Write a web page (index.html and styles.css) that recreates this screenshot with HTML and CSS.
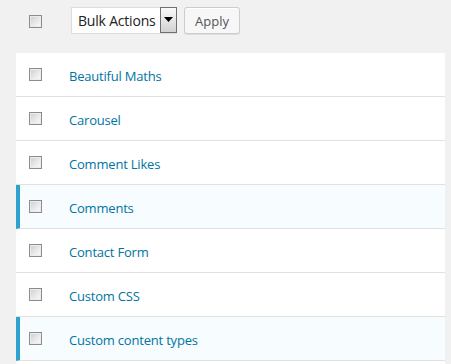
FILE: index.html
```html
<!DOCTYPE html>
<html>
<head>
<meta charset="utf-8">
<link rel="stylesheet" href="styles.css">
</head>
<body>
<div class="page">
  <div class="toolbar">
    <span class="cb-cell"><input type="checkbox" class="cb"></span>
    <div class="select">
      <span class="select-label">Bulk Actions</span>
      <span class="select-arrow"><svg width="9" height="5" viewBox="0 0 9 5"><path d="M0 0h9L4.5 5z" fill="#000"/></svg></span>
    </div>
    <button class="btn">Apply</button>
  </div>
  <div class="list">
    <div class="row"><span class="cb-cell"><input type="checkbox" class="cb"></span><a class="name">Beautiful Maths</a></div>
    <div class="row"><span class="cb-cell"><input type="checkbox" class="cb"></span><a class="name">Carousel</a></div>
    <div class="row"><span class="cb-cell"><input type="checkbox" class="cb"></span><a class="name">Comment Likes</a></div>
    <div class="row active"><span class="cb-cell"><input type="checkbox" class="cb"></span><a class="name">Comments</a></div>
    <div class="row"><span class="cb-cell"><input type="checkbox" class="cb"></span><a class="name">Contact Form</a></div>
    <div class="row"><span class="cb-cell"><input type="checkbox" class="cb"></span><a class="name">Custom CSS</a></div>
    <div class="row active"><span class="cb-cell"><input type="checkbox" class="cb"></span><a class="name">Custom content types</a></div>
    <div class="row-tail"></div>
  </div>
</div>
</body>
</html>
```
FILE: styles.css
```css
html, body {
  margin: 0;
  padding: 0;
  background: #f1f1f1;
  font-family: "Open Sans", "Noto Sans", sans-serif;
  overflow: hidden;
}
.page {
  width: 451px;
  height: 364px;
  overflow: hidden;
}
.toolbar {
  display: flex;
  align-items: center;
  height: 41px;
  padding: 0 0 0 29px;
  box-sizing: border-box;
  margin-bottom: 12px;
}
.toolbar .cb-cell {
  width: 42px;
  display: flex;
  align-items: center;
  margin-top: 1px;
}
.cb {
  appearance: none;
  -webkit-appearance: none;
  margin: 0;
  width: 13px;
  height: 13px;
  box-sizing: border-box;
  border: 1px solid #8c8c8c;
  background: linear-gradient(135deg, #c9cbce 0%, #e6e7e8 50%, #fbfbfb 100%);
  box-shadow: inset 0 0 0 1px #ececec;
  display: block;
}
.select {
  display: flex;
  align-items: center;
  height: 27px;
  box-sizing: border-box;
  border: 1px solid #dddddd;
  background: #fff;
  width: 106px;
  margin-top: -1px;
}
.select-label {
  flex: 1;
  padding-left: 6px;
  font-size: 14px;
  color: #222;
  font-family: "Open Sans", sans-serif;
  letter-spacing: -0.2px;
}
.select-arrow {
  width: 17px;
  height: 26px;
  margin: -1px -1px -1px 0;
  box-sizing: border-box;
  border: 1px solid #707070;
  background: linear-gradient(#fafafa, #d2d2d2);
  display: flex;
  align-items: flex-start;
  justify-content: center;
  padding-top: 9px;
}
.select-arrow svg { display: block; }
.btn {
  margin-left: 7px;
  height: 27px;
  width: 56px;
  box-sizing: border-box;
  border: 1px solid #cccccc;
  border-radius: 3px;
  background: #f7f7f7;
  box-shadow: inset 0 1px 0 #fff, 0 1px 0 rgba(0,0,0,0.08);
  font-family: "Open Sans", sans-serif;
  font-size: 13px;
  color: #555;
  padding: 0;
}
.list {
  margin-left: 16px;
  width: 429px;
  background: #fff;
}
.row {
  display: flex;
  align-items: center;
  height: 44px;
  box-sizing: border-box;
  border-bottom: 1px solid #e1e1e1;
  padding-left: 13px;
}
.row.active {
  background: #f7fcfe;
  border-left: 4px solid #2ea2cc;
  padding-left: 9px;
}
.row-tail {
  height: 20px;
}
.row .cb-cell {
  width: 40px;
  display: flex;
  align-items: center;
  margin-top: -1px;
}
.name {
  font-size: 13px;
  color: #0074a2;
  text-decoration: none;
  letter-spacing: -0.2px;
  margin-top: 2px;
}
```
